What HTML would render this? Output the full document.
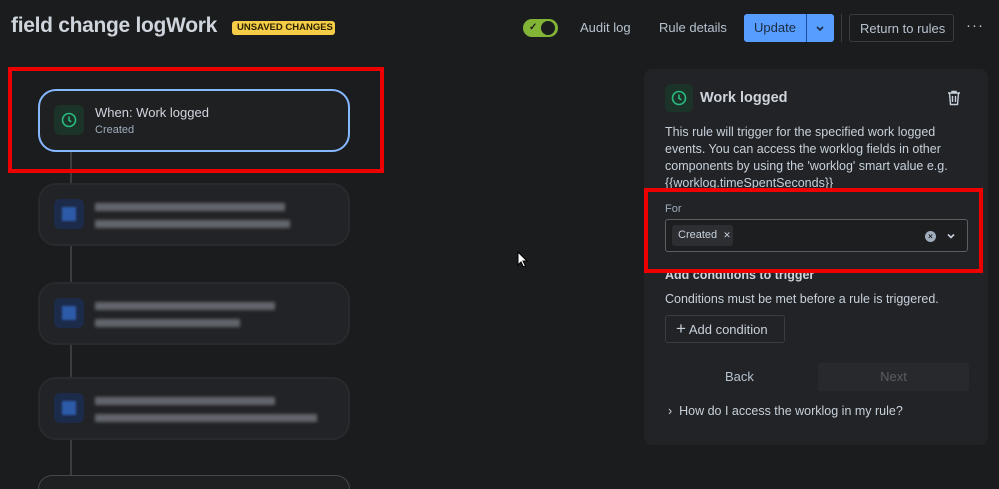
<!DOCTYPE html>
<html><head><style>
*{box-sizing:border-box;margin:0;padding:0}
html,body{width:999px;height:489px;overflow:hidden}
body{background:#1b1c1e;font-family:"Liberation Sans",sans-serif;color:#c7d1db;position:relative}
.a{position:absolute;white-space:nowrap}
.title{left:11px;top:14px;font-size:21px;font-weight:bold;color:#cfd5dc;letter-spacing:-0.3px}
.badge{left:232px;top:21px;background:#f5cd47;color:#2a2200;font-size:9.5px;font-weight:bold;padding:1px 5px;border-radius:3px;height:14px;line-height:12px;width:103px}
.nav{font-size:13px;color:#b6c2cf;top:20px}
.card{left:38px;width:312px;height:63px;border-radius:18px;background:#222326;border:2px solid #282a2d}
.ico{width:30px;height:30px;border-radius:6px;left:14px;top:14px}
.blur{filter:blur(1.5px);background:#62666c;height:8px}
.line{left:70px;width:2px;background:#3a3c40}
.red{border:4px solid #ee0000}
.panel{left:644px;top:69px;width:344px;height:376px;background:#222326;border-radius:8px}
.p{font-size:12.5px;line-height:17px;color:#c7d1db;white-space:normal}
</style></head><body>
<div class="a title">field change logWork</div>
<div class="a badge">UNSAVED CHANGES</div>

<div class="a" style="left:523px;top:19px;width:35px;height:18px;border-radius:9px;background:#82b536"></div>
<div class="a" style="left:541px;top:21px;width:14px;height:14px;border-radius:7px;background:#1b1c1e"></div>
<div class="a" style="left:529px;top:22px;font-size:10px;color:#1b1c1e;font-weight:bold">✓</div>
<div class="a nav" style="left:580px">Audit log</div>
<div class="a nav" style="left:659px">Rule details</div>
<div class="a" style="left:744px;top:14px;width:90px;height:28px;background:#579dff;border-radius:3px"></div>
<div class="a" style="left:806px;top:14px;width:1px;height:28px;background:#1d4f9a"></div>
<div class="a" style="left:754px;top:20px;font-size:13px;color:#1c2b41">Update</div>
<svg class="a" style="left:814px;top:22px" width="12" height="12"><path d="M3 5l3 3 3-3" stroke="#1c2b41" stroke-width="1.6" fill="none"/></svg>
<div class="a" style="left:841px;top:14px;width:1px;height:28px;background:#3a3c40"></div>
<div class="a" style="left:849px;top:14px;width:105px;height:28px;border:1px solid #3a3c40;border-radius:3px;font-size:13px;color:#b6c2cf;padding:6px 0 0 10px">Return to rules</div>
<div class="a" style="left:966px;top:17px;font-size:15px;color:#b6c2cf;letter-spacing:1px">···</div>

<div class="a line" style="top:150px;height:330px"></div>
<div class="a card" style="top:89px;border:2px solid #85b8ff;background:#1f2022">
 <div class="a ico" style="background:#1c3329"><svg width="30" height="30"><circle cx="15" cy="15" r="6.5" stroke="#2abb7f" stroke-width="1.6" fill="none"/><path d="M15 11.5v3.8l2.3 1.6" stroke="#2abb7f" stroke-width="1.6" fill="none"/></svg></div>
 <div class="a" style="left:55px;top:14px;font-size:13px;color:#cfd5dc">When: Work logged</div>
 <div class="a" style="left:55px;top:33px;font-size:11px;color:#9fadbc">Created</div>
</div>
<div class="a red" style="left:8px;top:67px;width:376px;height:106px"></div>

<div class="a card" style="top:183px"><div class="a ico" style="background:#1c2b4a"><div class="a" style="left:8px;top:8px;width:14px;height:14px;background:#2d5ba8;filter:blur(1px)"></div></div><div class="a blur" style="left:55px;top:18px;width:190px"></div><div class="a blur" style="left:55px;top:35px;width:195px"></div></div>
<div class="a card" style="top:282px"><div class="a ico" style="background:#1c2b4a"><div class="a" style="left:8px;top:8px;width:14px;height:14px;background:#2d5ba8;filter:blur(1px)"></div></div><div class="a blur" style="left:55px;top:18px;width:180px"></div><div class="a blur" style="left:55px;top:35px;width:145px"></div></div>
<div class="a card" style="top:377px"><div class="a ico" style="background:#1c2b4a"><div class="a" style="left:8px;top:8px;width:14px;height:14px;background:#2d5ba8;filter:blur(1px)"></div></div><div class="a blur" style="left:55px;top:18px;width:180px"></div><div class="a blur" style="left:55px;top:35px;width:222px"></div></div>
<div class="a" style="left:38px;top:475px;width:312px;height:14px;border-radius:18px 18px 0 0;border:1px solid #45484d;border-bottom:none;background:#1f2022"></div>

<svg class="a" style="left:517px;top:251px" width="12" height="18"><path d="M1 1v13l3-3 2.5 5 2-1-2.5-5h4z" fill="#fff" stroke="#000" stroke-width="1"/></svg>

<div class="a panel">
 <div class="a" style="left:21px;top:15px;width:28px;height:28px;border-radius:6px;background:#1c3329"><svg width="28" height="28"><circle cx="14" cy="14" r="6.5" stroke="#2abb7f" stroke-width="1.6" fill="none"/><path d="M14 10.5v3.8l2.3 1.6" stroke="#2abb7f" stroke-width="1.6" fill="none"/></svg></div>
 <div class="a" style="left:56px;top:21px;font-size:14.5px;font-weight:bold;color:#cfd5dc">Work logged</div>
 <svg class="a" style="left:303px;top:21px" width="14" height="16"><path d="M1 3h12M5 3V1.5h4V3M2.5 3l1 11.5h7l1-11.5M5.5 6v6M8.5 6v6" stroke="#c7d1db" stroke-width="1.4" fill="none"/></svg>
 <div class="a p" style="left:21px;top:55px;width:310px">This rule will trigger for the specified work logged events. You can access the worklog fields in other components by using the 'worklog' smart value e.g. {{worklog.timeSpentSeconds}}</div>
 <div class="a" style="left:21px;top:134px;font-size:11px;color:#9fadbc">For</div>
 <div class="a" style="left:21px;top:150px;width:303px;height:33px;border:1px solid #5b5e63;border-radius:3px;background:#1d1e20"></div>
 <div class="a" style="left:28px;top:156px;width:61px;height:21px;background:#2c2e32;border-radius:3px;font-size:11px;color:#c7d1db;padding:4px 0 0 6px">Created <span style="font-size:9px;margin-left:3px">✕</span></div>
 <div class="a" style="left:281px;top:162px;width:11px;height:11px;border-radius:6px;background:#9fadbc;color:#222;font-size:8px;line-height:11px;text-align:center;font-weight:bold">×</div>
 <svg class="a" style="left:302px;top:162px" width="10" height="10"><path d="M2 3.5l3 3 3-3" stroke="#c7d1db" stroke-width="1.6" fill="none"/></svg>
 <div class="a" style="left:21px;top:199px;font-size:12.5px;font-weight:bold;color:#cfd5dc">Add conditions to trigger</div>
 <div class="a p" style="left:21px;top:222px">Conditions must be met before a rule is triggered.</div>
 <div class="a" style="left:21px;top:246px;width:120px;height:28px;border:1px solid #3a3c40;border-radius:3px;font-size:13px;color:#c7d1db;padding:6px 0 0 10px"><span style="font-size:17px;line-height:13px;font-weight:300">+</span> Add condition</div>
 <div class="a" style="left:81px;top:300px;font-size:13px;color:#b6c2cf">Back</div>
 <div class="a" style="left:174px;top:294px;width:151px;height:28px;background:#28292c;border-radius:3px;font-size:13px;color:#5a5e63;text-align:center;padding-top:6px">Next</div>
 <div class="a p" style="left:24px;top:334px;font-size:12.5px">›&nbsp; How do I access the worklog in my rule?</div>
</div>
<div class="a red" style="left:644px;top:188px;width:339px;height:85px"></div>
</body></html>
